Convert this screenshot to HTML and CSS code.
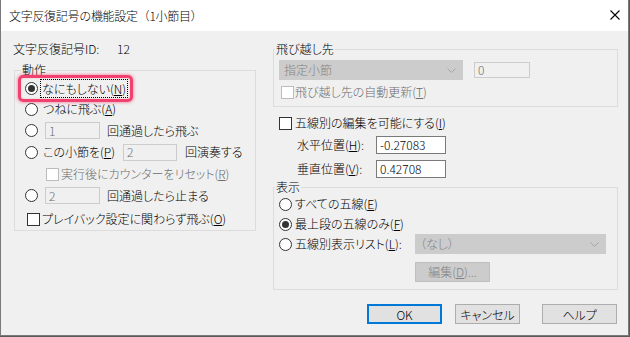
FILE: index.html
```html
<!DOCTYPE html>
<html lang="ja">
<head>
<meta charset="utf-8">
<title>文字反復記号の機能設定</title>
<link rel="stylesheet" href="styles.css">
</head>
<body>
<div class="window">
  <div class="titlebar">
    <span class="title">文字反復記号の機能設定（1小節目）</span>
    <svg class="close" width="10" height="10" viewBox="0 0 10 10"><path d="M0.5 0.5 L9.5 9.5 M9.5 0.5 L0.5 9.5" stroke="#000" stroke-width="1.1" fill="none"/></svg>
  </div>
  <div class="dialog">
    <div class="columns">
      <div class="col-left">
        <div class="id-row"><span class="id-label">文字反復記号ID:</span><span>12</span></div>
        <fieldset class="group group-action">
          <legend>動作</legend>
          <div class="inner">
            <div class="row r1">
              <span class="highlight"></span>
              <span class="radio on"></span>
              <span class="focus">なにもしない(<u>N</u>)</span>
            </div>
            <div class="row r2">
              <span class="radio"></span>
              <span class="txt">つねに飛ぶ(<u>A</u>)</span>
            </div>
            <div class="row r3">
              <span class="radio"></span>
              <span class="edit disabled w55">1</span>
              <span class="after">回通過したら飛ぶ</span>
            </div>
            <div class="row r4">
              <span class="radio"></span>
              <span class="txt lbl-play">この小節を(<u>P</u>)</span>
              <span class="edit disabled w54">2</span>
              <span class="after8">回演奏する</span>
            </div>
            <div class="row r5">
              <span class="check disabled"></span>
              <span class="dim">実行後にカウンターをリセット(<u>R</u>)</span>
            </div>
            <div class="row r6">
              <span class="radio"></span>
              <span class="edit disabled w55">2</span>
              <span class="after">回通過したら止まる</span>
            </div>
            <div class="row r7">
              <span class="check"></span>
              <span>プレイバック設定に関わらず飛ぶ(<u>O</u>)</span>
            </div>
          </div>
        </fieldset>
      </div>
      <div class="col-right">
        <fieldset class="group group-jump">
          <legend>飛び越し先</legend>
          <div class="inner">
            <div class="row jr1">
              <span class="combo disabled w184">指定小節<svg class="chev" width="9" height="5" viewBox="0 0 9 5"><path d="M0.5 0.5 L4.5 4.5 L8.5 0.5" stroke="#a6a6a6" fill="none"/></svg></span>
              <span class="edit disabled w56 h16">0</span>
            </div>
            <div class="row jr2">
              <span class="check disabled"></span>
              <span class="dim">飛び越し先の自動更新(<u>T</u>)</span>
            </div>
          </div>
        </fieldset>
        <div class="row staff-edit">
          <span class="check"></span>
          <span>五線別の編集を可能にする(<u>I</u>)</span>
        </div>
        <div class="row pos-h">
          <span class="pos-label">水平位置(<u>H</u>):</span>
          <span class="edit w70">-0.27083</span>
        </div>
        <div class="row pos-v">
          <span class="pos-label">垂直位置(<u>V</u>):</span>
          <span class="edit w70">0.42708</span>
        </div>
        <fieldset class="group group-view">
          <legend>表示</legend>
          <div class="inner">
            <div class="row">
              <span class="radio"></span>
              <span class="txt3">すべての五線(<u>E</u>)</span>
            </div>
            <div class="row">
              <span class="radio on"></span>
              <span class="txt3">最上段の五線のみ(<u>F</u>)</span>
            </div>
            <div class="row">
              <span class="radio"></span>
              <span class="txt3">五線別表示リスト(<u>L</u>):</span>
              <span class="combo disabled w191 push">（なし）<svg class="chev" width="9" height="5" viewBox="0 0 9 5"><path d="M0.5 0.5 L4.5 4.5 L8.5 0.5" stroke="#a6a6a6" fill="none"/></svg></span>
            </div>
            <div class="row edit-row">
              <span class="btn disabled w75">編集(<u>D</u>)...</span>
            </div>
          </div>
        </fieldset>
      </div>
    </div>
    <div class="buttons">
      <span class="btn default w75">OK</span>
      <span class="btn w65 cancel">キャンセル</span>
      <span class="btn w75">ヘルプ</span>
    </div>
  </div>
</div>
</body>
</html>
```
FILE: styles.css
```css
html, body {
  margin: 0;
  padding: 0;
}
body {
  background: #5a5a5a;
  width: 630px;
  height: 337px;
  overflow: hidden;
  font-family: "Noto Sans CJK JP", "Noto Sans", sans-serif;
  font-size: 12px;
  font-weight: 300;
  font-feature-settings: "palt";
  color: #000;
}
.window {
  box-sizing: border-box;
  width: 629px;
  height: 336px;
  border: 1px solid #7a7a7a;
  border-top: none;
  background: #f0f0f0;
  display: flex;
  flex-direction: column;
}
.titlebar {
  height: 31px;
  flex: none;
  background: #fff;
  display: flex;
  align-items: center;
  padding-left: 8px;
  padding-right: 8px;
}
.title {
  flex: 1;
  line-height: 14px;
  font-feature-settings: normal;
  letter-spacing: -0.3px;
}
.close {
  margin-top: -1px;
}
.dialog {
  flex: 1;
  padding: 11px 10px 0 13px;
}
.columns {
  display: grid;
  grid-template-columns: 242px 345px;
  column-gap: 17px;
  align-items: start;
}
.id-row {
  height: 14px;
  line-height: 14px;
  display: flex;
  margin-left: -1px;
  margin-bottom: 7px;
}
.id-label {
  width: 104px;
}
.group {
  margin: 0;
  padding: 0;
  border: 1px solid #dcdcdc;
  min-width: 0;
}
.group legend {
  padding: 0 1px;
  height: 14px;
  line-height: 14px;
  font-size: 12px;
}
.group-action legend { margin-left: 6px; }
.group-jump legend, .group-view legend { margin-left: 1px; }

.row {
  display: flex;
  align-items: center;
  white-space: nowrap;
  line-height: 14px;
  position: relative;
}

/* Left group */
.group-action .inner {
  padding: 1px 0 0 10px;
}
.r1 { height: 20px; }
.r2 { height: 22px; }
.r3 { height: 21px; }
.r4 { height: 22px; }
.r5 { height: 22px; }
.r6 { height: 21px; }
.r7 { height: 22px; margin-top: 2px; }

.highlight {
  position: absolute;
  left: -7px;
  top: -3px;
  width: 115px;
  height: 27px;
  box-sizing: border-box;
  border: 3px solid #f0416f;
  border-radius: 5px;
  box-shadow: 0 0 3px 1px rgba(240, 65, 111, 0.45), inset 0 0 2px rgba(240, 65, 111, 0.35);
}
.focus {
  margin-left: 3px;
  padding: 1px 1px;
  outline: 1px dotted #000;
  outline-offset: 0;
  line-height: 15px;
}
.txt { margin-left: 5px; }
.lbl-play { width: 80px; }
.r3 .edit, .r6 .edit { margin-left: 7px; }
.after { margin-left: 7px; }
.after8 { margin-left: 8px; }
.r5 .check { margin-left: 21px; margin-right: 2px; }
.r7 .check { margin-left: 2px; margin-right: 2px; }

/* Controls */
.radio {
  box-sizing: border-box;
  width: 13px;
  height: 13px;
  flex: none;
  border: 1px solid #333;
  border-radius: 50%;
  background: #fff;
  display: flex;
  align-items: center;
  justify-content: center;
}
.radio.on::after {
  content: "";
  width: 7px;
  height: 7px;
  border-radius: 50%;
  background: #333;
}
.check {
  box-sizing: border-box;
  width: 13px;
  height: 13px;
  flex: none;
  border: 1px solid #333;
  background: #fff;
}
.check.disabled {
  border-color: #bcbcbc;
}
.dim { color: #6d6d6d; }
.edit {
  box-sizing: border-box;
  height: 18px;
  border: 1px solid #7a7a7a;
  background: #fff;
  padding-left: 3px;
  display: flex;
  align-items: center;
  flex: none;
}
.edit.disabled {
  border-color: #cccccc;
  background: #f0f0f0;
  color: #6d6d6d;
  height: 17px;
}
.h16 { height: 16px !important; }
.w54 { width: 54px; }
.w55 { width: 55px; }
.w56 { width: 56px; }
.w65 { width: 65px; }
.w70 { width: 70px; }
.w75 { width: 75px; }
.w184 { width: 184px; }
.w191 { width: 191px; }
.combo {
  box-sizing: border-box;
  height: 20px;
  border: 1px solid #cccccc;
  background: #cccccc;
  color: #838383;
  padding-left: 4px;
  display: flex;
  align-items: center;
  flex: none;
  position: relative;
}
.chev {
  margin-left: auto;
  margin-right: 6px;
}
.btn {
  box-sizing: border-box;
  height: 20px;
  border: 1px solid #adadad;
  background: #e1e1e1;
  display: flex;
  align-items: center;
  justify-content: center;
  flex: none;
}
.btn.disabled {
  background: #cccccc;
  border-color: #bfbfbf;
  color: #838383;
}
.btn.default {
  border: 2px solid #0078d7;
}

/* Right column */
.group-jump .inner {
  padding: 4px 0 4px 5px;
}
.jr1 { height: 20px; }
.jr1 .edit { margin-left: 11px; }
.jr2 { height: 20px; margin-top: 2px; }
.jr2 .check { margin-left: 2px; margin-right: 1px; }
.staff-edit {
  height: 20px;
  margin-top: 6px;
  padding-left: 6px;
}
.staff-edit .check { margin-right: 3px; }
.pos-h { height: 20px; margin-top: 2px; padding-left: 24px; }
.pos-v { height: 20px; margin-top: 4px; padding-left: 24px; }
.pos-label { width: 79px; }
.group-view {
  margin-top: 1px;
}
.group-view .inner {
  padding: 0 0 7px 5px;
}
.group-view .row { height: 20px; }
.txt3 { margin-left: 3px; }
.push { margin-left: auto; margin-right: 11px; }
.group-view .edit-row {
  margin-top: 8px;
  padding-left: 136px;
}

.buttons {
  display: flex;
  justify-content: flex-end;
  margin-top: 14px;
  padding-right: 1px;
}
.buttons .btn.default { margin-right: 13px; }
.buttons .cancel { margin-right: 22px; }
```
